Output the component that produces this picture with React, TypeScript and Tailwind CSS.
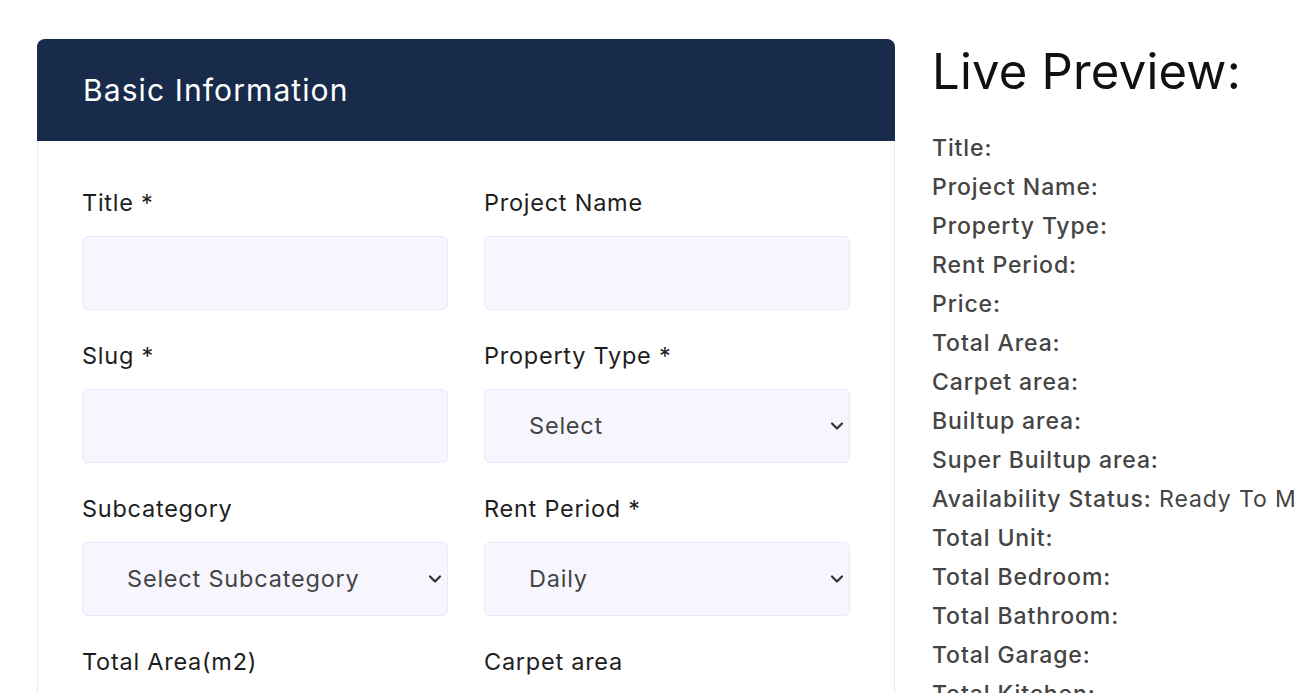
import React from "react";

const font = { fontFamily: "Inter, 'Open Sans', sans-serif" };

function Chevron() {
  return (
    <svg className="pointer-events-none absolute right-[5px] top-1/2 -translate-y-1/2" width="14" height="9" viewBox="0 0 14 9" fill="none">
      <path d="M2 2 L7 7 L12 2" stroke="#333" strokeWidth="2.2" strokeLinecap="round" strokeLinejoin="round" />
    </svg>
  );
}

function Field({ label, select }: { label: string; select?: string }) {
  return (
    <div className="flex flex-col">
      <label className="text-[23.5px] leading-[26px] tracking-[0.75px] text-[#1e1e1e] mb-[20px]">{label}</label>
      {select ? (
        <div className="relative h-[74px] rounded-[6px] border border-[#e9e7fb] bg-[#f7f6fe] flex items-center pl-[44px]">
          <span className="text-[23.5px] tracking-[0.8px] text-[#444]">{select}</span>
          <Chevron />
        </div>
      ) : (
        <div className="h-[74px] rounded-[6px] border border-[#e9e7fb] bg-[#f7f6fe]" />
      )}
    </div>
  );
}

const items = [
  "Title:",
  "Project Name:",
  "Property Type:",
  "Rent Period:",
  "Price:",
  "Total Area:",
  "Carpet area:",
  "Builtup area:",
  "Super Builtup area:",
  "Availability Status:",
  "Total Unit:",
  "Total Bedroom:",
  "Total Bathroom:",
  "Total Garage:",
  "Total Kitchen:",
];

export default function App() {
  return (
    <div className="w-[1294px] h-[693px] overflow-hidden bg-white flex gap-[37px] pl-[37px] pt-[39px]" style={font}>
      <div className="w-[858px] shrink-0 rounded-t-[8px] border border-[#e9e7fb] self-start">
        <div className="h-[102px] -mx-px -mt-px rounded-t-[8px] bg-[#182b4b] flex items-center px-[46px]">
          <h2 className="text-[30px] tracking-[1.1px] text-white font-normal">Basic Information</h2>
        </div>
        <div className="px-[44px] pt-[49px] grid grid-cols-2 gap-x-[36px] gap-y-[33px]">
          <Field label="Title *" />
          <Field label="Project Name" />
          <Field label="Slug *" />
          <Field label="Property Type *" select="Select" />
          <Field label="Subcategory" select="Select Subcategory" />
          <Field label="Rent Period *" select="Daily" />
          <Field label="Total Area(m2)" />
          <Field label="Carpet area" />
        </div>
      </div>
      <div className="shrink-0 w-[600px]">
        <h1 className="text-[49px] leading-[66px] tracking-[0.2px] text-[#111]">Live Preview:</h1>
        <div className="mt-[24px] flex flex-col">
          {items.map((t) => (
            <div key={t} className="text-[23px] leading-[39px] tracking-[0.9px] text-[#444] whitespace-nowrap">
              <span className="font-medium">{t}</span>
              {t === "Availability Status:" && <span className="font-normal"> Ready To Move</span>}
            </div>
          ))}
        </div>
      </div>
    </div>
  );
}
